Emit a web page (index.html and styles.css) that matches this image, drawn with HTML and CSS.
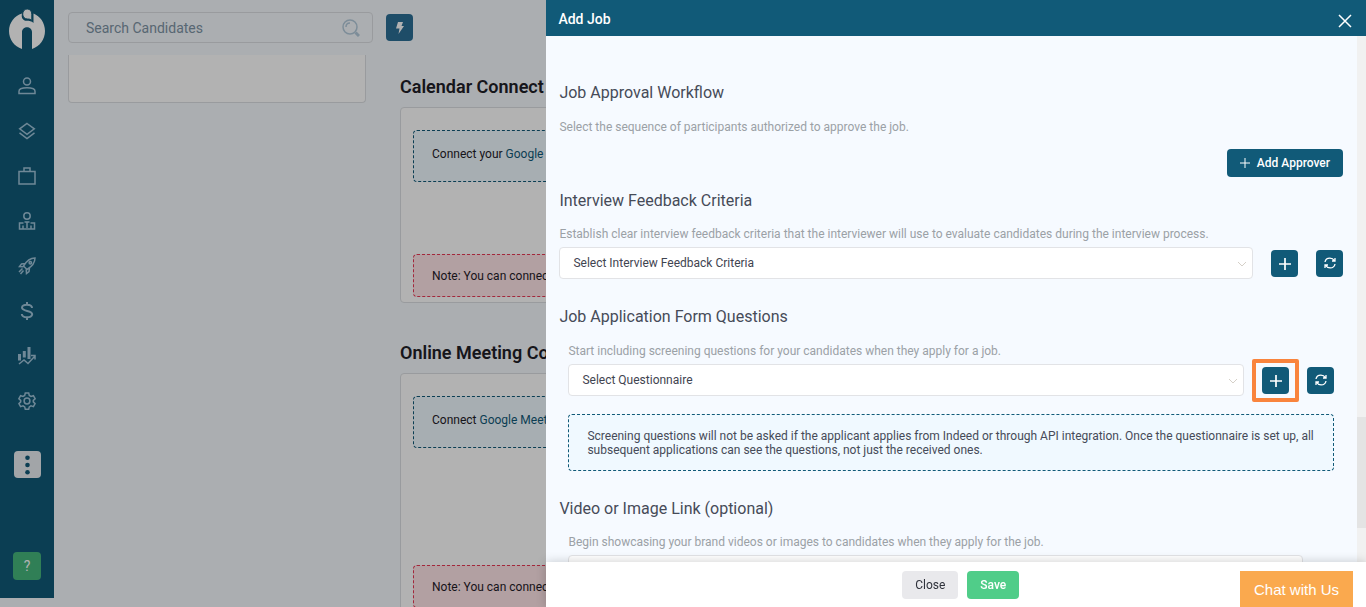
FILE: index.html
```html
<!DOCTYPE html>
<html lang="en">
<head>
  <meta charset="UTF-8" />
  <meta name="viewport" content="width=device-width, initial-scale=1.0" />
  <title>Add Job</title>
  <link rel="stylesheet" href="styles.css">
</head>
<body>
  <!-- Left navigation -->
  <aside class="sidebar">
    <a href="#" class="logo" aria-label="Home">
      <svg width="36" height="41" viewBox="0 0 36 41">
        <path d="M13 4.500C5.500 6.600 0 13.800 0 22c0 8.500 5.300 15.500 13 18V23c0-6.500 10-6.500 10 0v17c7.700-2.500 13-9.500 13-18 0-8.200-5-15-11.500-17.500v9.500c-2-1.800-4-2.200-7-2.200-3.500 0-5.500-3-4.500-7.300z" />
        <path class="drop" d="M18.200 0c2.800 0 4.600 2.200 4.600 5.200v6.300c-1.200-1.300-2.500-1.500-4.600-1.500-2.600 0-4.500-2.100-4.500-4.900C13.700 2.200 15.500 0 18.200 0z" />
      </svg>
    </a>
    <nav>
      <a href="#" aria-label="Candidates">
        <svg viewBox="0 0 18 18"><circle cx="9" cy="4.500" r="3.500" /><path d="M1 16.500v-2.300c0-2 3.500-3.400 8-3.400s8 1.400 8 3.400v2.300z" /></svg>
      </a>
      <a href="#" aria-label="Pipeline">
        <svg viewBox="0 0 18 18"><path d="M9 1.500l7.300 5.300L9 12.300 1.700 6.800zM1.500 10.800L9 16.600l7.500-5.800" /></svg>
      </a>
      <a href="#" aria-label="Jobs">
        <svg viewBox="0 0 18 18"><path d="M1 4.500h16v12.500H1zM6 4.500V1h6v3.500" /></svg>
      </a>
      <a href="#" aria-label="Clients">
        <svg viewBox="0 0 18 18"><circle cx="9" cy="4" r="3.200" /><path d="M5.500 11H1.500v6h15v-6h-4M6.500 10h5M9 10v6M5 13.500V17M13 13.500V17" /></svg>
      </a>
      <a href="#" aria-label="Sourcing">
        <svg viewBox="0 0 18 18"><path d="M17 1c-5 0-8.500 3-11.500 8l3.500 3.500C14 9.500 17 6 17 1zM7 6.500L3.500 7 1.500 9.500l4 .3M11.500 11l-.5 3.500L8.500 16.500l-.3-4M4.500 11.500L1 15M5.500 13.500L2.500 17" /><circle cx="12.300" cy="5.700" r="1.200" /></svg>
      </a>
      <a href="#" aria-label="Billing">
        <svg viewBox="0 0 18 18" class="bold"><path d="M9 0v3M9 15v3M14 6c0-4-10-4.300-10-.4C4 10 14.200 8 14.200 12.300 14.200 16.500 4 16.200 3.800 12" /></svg>
      </a>
      <a href="#" aria-label="Reports">
        <svg viewBox="0 0 18 18"><path d="M1 17l5-4 4 3.500 7-7.500M13 8.500h4v4" /><path class="bars" d="M1.500 7v6.500M6.300 4v6.500M11 0v12" /></svg>
      </a>
      <a href="#" aria-label="Settings">
        <svg viewBox="0 0 18 18"><path d="M7.300 1h3.400l.6 2.400 1.700 1 2.400-.7 1.700 3-1.800 1.700v1.500l1.800 1.700-1.700 3-2.400-.7-1.700 1-.6 2.400H7.300l-.6-2.400-1.700-1-2.400.7-1.700-3 1.800-1.700V8.400L.9 6.700l1.700-3 2.400.7 1.700-1z" /><circle cx="9" cy="9" r="2.900" /></svg>
      </a>
    </nav>
    <button class="more" aria-label="More">
      <svg width="7" height="20" viewBox="0 0 7 20"><circle cx="3.500" cy="2.800" r="2.300" /><circle cx="3.500" cy="10" r="2.300" /><circle cx="3.500" cy="17.200" r="2.300" /></svg>
    </button>
    <button class="help">?</button>
  </aside>

  <main>
    <header class="topbar">
      <div class="search">
        <input type="text" placeholder="Search Candidates" aria-label="Search Candidates" />
        <svg width="18" height="18" viewBox="0 0 18 18"><circle cx="8" cy="8" r="7" /><path d="M4 8c0-2.500 1.500-4 4-4" /><path class="grip" d="M13.500 13.500L17 17" /></svg>
      </div>
      <button class="quick" aria-label="Quick actions">
        <svg width="8" height="12" viewBox="0 0 8 12"><path d="M2 0h5L5.500 4H8L2.500 12l1-5.500H0z" /></svg>
      </button>
    </header>

    <div class="settings">
      <div class="side-card"></div>
      <div class="integrations">
        <section>
          <h2>Calendar Connect</h2>
          <div class="panel">
            <div class="callout info">Connect your <a href="#">Google Calendar</a></div>
            <div class="callout danger">Note: You can connect only one calendar at a time.</div>
          </div>
        </section>
        <section class="meeting">
          <h2>Online Meeting Connect</h2>
          <div class="panel">
            <div class="callout info">Connect <a href="#">Google Meet</a></div>
            <div class="callout danger">Note: You can connect only one meeting tool at a time.</div>
          </div>
        </section>
      </div>
    </div>
  </main>

  <div class="backdrop"></div>

  <!-- Add job drawer -->
  <div class="drawer" role="dialog" aria-labelledby="drawerTitle">
    <div class="drawer-header">
      <h1 id="drawerTitle">Add Job</h1>
      <button class="close-x" aria-label="Close">
        <svg width="14" height="14" viewBox="0 0 14 14"><path d="M1 1l12 12M13 1L1 13" /></svg>
      </button>
    </div>

    <div class="drawer-main">
      <div class="drawer-body">
        <section class="group approval">
          <h3>Job Approval Workflow</h3>
          <p>Select the sequence of participants authorized to approve the job.</p>
          <button class="btn primary">
            <svg width="10" height="10" viewBox="0 0 10 10"><path d="M5 0v10M0 5h10" /></svg>
            Add Approver
          </button>
        </section>

        <section class="group feedback">
          <h3>Interview Feedback Criteria</h3>
          <label for="criteria">Establish clear interview feedback criteria that the interviewer will use to evaluate candidates during the interview process.</label>
          <div class="row">
            <div class="select">
              <select id="criteria"><option>Select Interview Feedback Criteria</option></select>
              <svg width="10" height="6" viewBox="0 0 10 6"><path d="M1 1l4 4 4-4" /></svg>
            </div>
            <button class="icon-btn" aria-label="Add criteria">
              <svg width="13" height="13" viewBox="0 0 13 13"><path class="plus" d="M7 1v12M1 7h12" /></svg>
            </button>
            <button class="icon-btn" aria-label="Refresh criteria">
              <svg width="12" height="12" viewBox="0 0 12 12"><path d="M1 5c.4-2.300 2.500-3.900 4.900-3.900 1.900 0 3.500 1 4.400 2.500M11 1v3H8M11 7c-.4 2.300-2.500 3.900-4.900 3.900-1.900 0-3.500-1-4.400-2.500M1 11V8h3" /></svg>
            </button>
          </div>
        </section>

        <section class="group">
          <h3>Job Application Form Questions</h3>
          <div class="inset">
            <label for="questionnaire">Start including screening questions for your candidates when they apply for a job.</label>
            <div class="row">
              <div class="select">
                <select id="questionnaire"><option>Select Questionnaire</option></select>
                <svg width="10" height="6" viewBox="0 0 10 6"><path d="M1 1l4 4 4-4" /></svg>
              </div>
              <button class="icon-btn highlight" aria-label="Add questionnaire">
                <svg width="13" height="13" viewBox="0 0 13 13"><path class="plus" d="M7 1v12M1 7h12" /></svg>
              </button>
              <button class="icon-btn" aria-label="Refresh questionnaires">
                <svg width="12" height="12" viewBox="0 0 12 12"><path d="M1 5c.4-2.300 2.500-3.900 4.900-3.900 1.900 0 3.500 1 4.400 2.500M11 1v3H8M11 7c-.4 2.300-2.500 3.900-4.900 3.900-1.900 0-3.500-1-4.400-2.500M1 11V8h3" /></svg>
              </button>
            </div>
            <div class="note">Screening questions will not be asked if the applicant applies from Indeed or through API integration. Once the questionnaire is set up, all subsequent applications can see the questions, not just the received ones.</div>
          </div>
        </section>

        <section class="group video">
          <h3>Video or Image Link (optional)</h3>
          <div class="inset">
            <label for="media">Begin showcasing your brand videos or images to candidates when they apply for the job.</label>
            <input type="text" id="media" class="media" />
          </div>
        </section>
      </div>
      <div class="scrollbar"><div class="thumb"></div></div>
    </div>

    <div class="drawer-footer">
      <button class="btn">Close</button>
      <button class="btn save">Save</button>
    </div>
  </div>

  <button class="chat">Chat with Us</button>
</body>
</html>
```
FILE: styles.css
```css
* {
  box-sizing: border-box;
}

body {
  margin: 0;
  height: 100vh;
  overflow: hidden;
  display: flex;
  background: #f5f9fe;
  color: #1f2028;
  font-family: Roboto, "Liberation Sans", sans-serif;
  font-size: 12px;
  line-height: 14px;
}

h1, h2, h3, p {
  margin: 0;
}

a {
  color: #115a78;
  text-decoration: none;
}

button {
  border: none;
  padding: 0;
  border-radius: 4px;
  font-family: inherit;
  font-size: 12px;
  display: flex;
  align-items: center;
  justify-content: center;
  cursor: pointer;
}

svg {
  fill: none;
  stroke: currentColor;
  display: block;
}

/* sidebar */
.sidebar {
  width: 54px;
  flex: none;
  margin-bottom: 9px;
  padding: 9px 0 18px;
  background: #115a78;
  display: flex;
  flex-direction: column;
  align-items: center;
}

.logo svg {
  fill: #fff;
  stroke: none;
}

.logo .drop {
  stroke: #115a78;
  stroke-width: 1px;
}

.sidebar nav {
  margin-top: 13px;
}

.sidebar nav a {
  height: 45px;
  display: flex;
  align-items: center;
  color: #9fc3d8;
}

.sidebar nav svg {
  width: 18px;
  height: 18px;
  stroke-width: 1.5;
}

.sidebar nav svg.bold {
  stroke-width: 2;
}

.sidebar nav .bars {
  stroke-width: 3;
}

.more {
  width: 27px;
  height: 27px;
  margin-top: 28px;
  background: #e8ecf1;
  color: #115a78;
}

.more svg {
  fill: currentColor;
  stroke: none;
}

.help {
  width: 28px;
  height: 28px;
  margin-top: auto;
  background: #46b67c;
  color: #fff;
  font-size: 14px;
}

/* page behind the drawer */
main {
  flex: 1;
  min-width: 0;
  padding-left: 14px;
}

.topbar {
  height: 55px;
  padding-top: 12px;
  display: flex;
  gap: 13px;
}

.search {
  width: 305px;
  height: 31px;
  padding: 0 12px 0 17px;
  border: 1px solid #dcdfe3;
  border-radius: 4px;
  display: flex;
  align-items: center;
  color: #b4cbdb;
}

.search input {
  flex: 1;
  min-width: 0;
  padding: 0;
  border: none;
  outline: none;
  background: none;
  font-family: inherit;
  font-size: 14px;
}

.search input::placeholder {
  color: #7e94a5;
}

.search svg {
  stroke-width: 1.5;
}

.search .grip {
  stroke-width: 3;
}

.quick {
  width: 27px;
  height: 27px;
  margin-top: 2px;
  background: #2c6f96;
  color: #fff;
}

.quick svg {
  fill: currentColor;
  stroke: none;
}

.settings {
  display: flex;
  align-items: flex-start;
  gap: 34px;
}

.side-card {
  width: 298px;
  height: 48px;
  flex: none;
  background: #fff;
  border: 1px solid #dcdfe3;
  border-top: none;
  border-radius: 0 0 4px 4px;
}

.integrations {
  flex: 1;
  padding: 20px 14px 0 0;
}

.integrations h2 {
  margin-bottom: 8px;
  font-size: 18px;
  line-height: 24px;
  font-weight: 600;
}

.panel {
  padding: 22px 12px 5px;
  background: #fff;
  border: 1px solid #dcdfe3;
  border-radius: 4px;
}

.callout {
  padding: 14px 18px 13px;
  border: 1px dashed;
  border-radius: 4px;
}

.info {
  padding: 16px 18px 20px;
  background: #f0f9ff;
  border-color: #115a78;
}

.danger {
  margin-top: 72px;
  background: #ffe5e8;
  border-color: #e93a55;
}

.meeting {
  margin-top: 38px;
}

.meeting .danger {
  margin-top: 117px;
}

.backdrop {
  position: fixed;
  inset: 0;
  background: rgba(0, 0, 0, 0.3);
}

/* drawer */
.drawer {
  position: fixed;
  top: 0;
  right: 0;
  bottom: 0;
  width: 60vw;
  display: flex;
  flex-direction: column;
  background: #f6faff;
  color: #464b58;
}

.drawer-header {
  height: 36px;
  flex: none;
  padding: 2px 14px 0 12px;
  display: flex;
  align-items: center;
  justify-content: space-between;
  background: #115a78;
  color: #fff;
}

.drawer-header h1 {
  font-size: 14px;
  line-height: 20px;
  font-weight: 500;
}

.close-x {
  margin-top: 3px;
  background: none;
  color: #fff;
}

.close-x svg {
  stroke-width: 1.5;
}

.drawer-main {
  flex: 1;
  min-height: 0;
  display: flex;
}

.drawer-body {
  flex: 1;
  padding: 45px 14px 0 13px;
  overflow: hidden;
}

.group h3 {
  margin-bottom: 15px;
  font-size: 16px;
  line-height: 24px;
  font-weight: 400;
}

.group p,
.group label {
  display: block;
  color: #9ba1a6;
}

.group + .group {
  margin-top: 26px;
}

.approval + .feedback {
  margin-top: 12px;
}

.approval .btn {
  margin: 15px 0 0 auto;
}

.feedback h3,
.video h3 {
  margin-bottom: 14px;
}

.inset {
  padding: 0 9px;
}

.row {
  margin-top: 6px;
  display: flex;
  align-items: center;
  gap: 18px;
}

.select {
  flex: 1;
  position: relative;
}

.select select,
.media {
  width: 100%;
  height: 32px;
  padding: 0 13px;
  border: 1px solid #e2e3e6;
  border-radius: 4px;
  background: #fff;
  color: #3f4450;
  font-family: inherit;
  font-size: 12px;
  appearance: none;
}

.select select {
  display: block;
}

.select svg {
  position: absolute;
  right: 6px;
  top: 14px;
  color: #d5d0c8;
}

.icon-btn {
  width: 27px;
  height: 27px;
  background: #115a78;
  color: #fff;
}

.icon-btn svg {
  stroke-width: 1.3;
}

.icon-btn .plus {
  stroke-width: 1.7;
}

.highlight {
  position: relative;
}

.highlight::after {
  content: "";
  position: absolute;
  inset: -8px -10px;
  border: 4px solid #f9843d;
  border-radius: 2px;
}

.note {
  margin-top: 18px;
  padding: 14px 18px 13px;
  border: 1px dashed #115a78;
  border-radius: 4px;
  background: #f0f9ff;
}

.media {
  width: calc(100% - 31px);
  margin-top: 6px;
}

.scrollbar {
  width: 9px;
  flex: none;
  display: grid;
  grid-template-rows: 381fr 111fr 34fr;
  background: #f1f1f1;
}

.thumb {
  grid-row: 2;
  background: #e4e4e4;
}

.btn {
  height: 28px;
  padding: 0 13px;
  gap: 7px;
  background: #e9e9ec;
  color: #2f323b;
}

.primary {
  background: #115a78;
  color: #fff;
  font-weight: 500;
}

.save {
  background: #50cd89;
  color: #fff;
  font-weight: 500;
}

.drawer-footer {
  position: relative;
  height: 45px;
  flex: none;
  display: flex;
  align-items: center;
  justify-content: center;
  padding-left: 9px;
  gap: 9px;
  background: #fff;
  box-shadow: 0 0 10px rgba(0, 0, 0, 0.2);
}

.chat {
  position: fixed;
  right: 13px;
  bottom: 0;
  height: 36px;
  padding: 0 14px;
  border-radius: 0;
  background: #faa94e;
  color: #fff;
  font-family: "Liberation Sans", Arial, sans-serif;
  font-size: 15px;
}
```
